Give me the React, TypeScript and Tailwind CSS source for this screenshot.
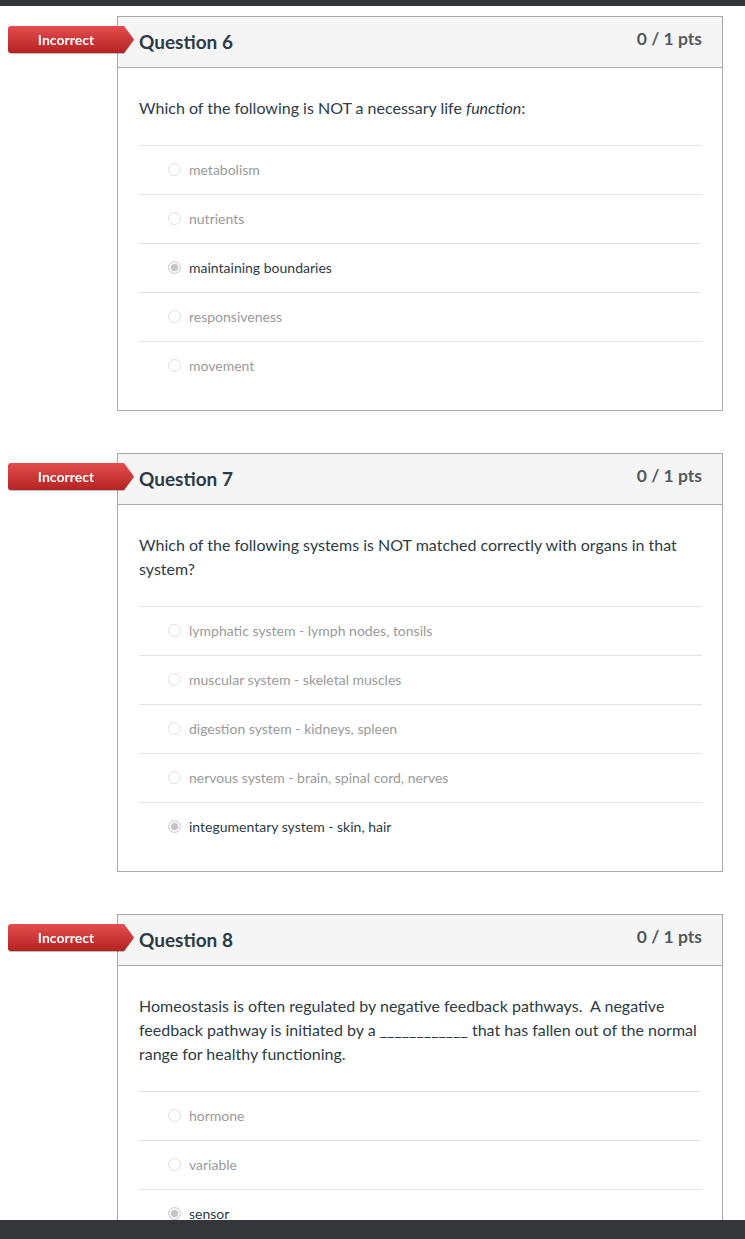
type Answer = { text: string; selected?: boolean };

type Question = {
  number: number;
  prompt: React.ReactNode;
  answers: Answer[];
};

const QUESTIONS: Question[] = [
  {
    number: 6,
    prompt: (
      <>
        Which of the following is NOT a necessary life <em>function</em>:
      </>
    ),
    answers: [
      { text: "metabolism" },
      { text: "nutrients" },
      { text: "maintaining boundaries", selected: true },
      { text: "responsiveness" },
      { text: "movement" },
    ],
  },
  {
    number: 7,
    prompt: "Which of the following systems is NOT matched correctly with organs in that system?",
    answers: [
      { text: "lymphatic system - lymph nodes, tonsils" },
      { text: "muscular system - skeletal muscles" },
      { text: "digestion system - kidneys, spleen" },
      { text: "nervous system - brain, spinal cord, nerves" },
      { text: "integumentary system - skin, hair", selected: true },
    ],
  },
  {
    number: 8,
    prompt: (
      <>
        Homeostasis is often regulated by negative feedback pathways.&nbsp; A negative feedback
        pathway is initiated by a ____________ that has fallen out of the normal range for healthy
        functioning.
      </>
    ),
    // only what shows above the footer bar
    answers: [{ text: "hormone" }, { text: "variable" }, { text: "sensor", selected: true }],
  },
];

function IncorrectBadge() {
  return (
    <div className="absolute left-[-110px] top-[9px] flex h-[27px] drop-shadow-[0_1px_0_rgba(0,0,0,0.25)]">
      <div className="flex w-[116px] items-center justify-center rounded-l-[3px] bg-gradient-to-b from-[#e44d4d] to-[#b42222] text-[14px] font-bold text-white">
        Incorrect
      </div>
      <div className="w-[10px] bg-gradient-to-b from-[#e44d4d] to-[#b42222] [clip-path:polygon(0_0,100%_50%,0_100%)]" />
    </div>
  );
}

function Radio({ selected }: { selected?: boolean }) {
  return (
    <span
      className={
        selected
          ? "flex h-[13px] w-[13px] items-center justify-center rounded-full border border-[#cfcfcf] bg-[#f4f4f4]"
          : "h-[13px] w-[13px] rounded-full border border-[#dedede] bg-white"
      }
    >
      {selected && <span className="h-[7px] w-[7px] rounded-full bg-[#c4c4c4]" />}
    </span>
  );
}

function QuestionCard({ q }: { q: Question }) {
  return (
    <div className="relative w-[606px] shrink-0 border border-[#a9a9a9] bg-white">
      <IncorrectBadge />
      <div className="flex h-[51px] items-center justify-between border-b border-[#a9a9a9] bg-[#f5f5f5] pl-[21px] pr-[20px]">
        <h2 className="text-[19px] font-bold text-[#2d3b45]">Question {q.number}</h2>
        <span className="mb-[6px] text-[17.5px] font-bold text-[#555a5e]">0 / 1 pts</span>
      </div>
      <div className="pb-[20px] pl-[21px] pr-[20px] pt-[28px]">
        <p className="mb-[25px] text-[16px] leading-[24px] text-[#2d3b45]">{q.prompt}</p>
        <div>
          {q.answers.map((a) => (
            <div
              key={a.text}
              className="flex h-[49px] items-center border-t border-[#e3e3e3] pb-[2px] pl-[29px]"
            >
              <Radio selected={a.selected} />
              <span
                className={
                  a.selected
                    ? "ml-[8px] text-[14px] text-[#2d3b45]"
                    : "ml-[8px] text-[14px] text-[#9a9a9a]"
                }
              >
                {a.text}
              </span>
            </div>
          ))}
        </div>
      </div>
    </div>
  );
}

export default function App() {
  return (
    <div className="flex h-[1239px] w-[745px] flex-col overflow-hidden bg-white font-['Lato',sans-serif]">
      <div className="h-[6px] shrink-0 bg-[#343539]" />
      <div className="flex min-h-0 flex-1 flex-col gap-[42px] overflow-hidden pl-[117px] pt-[10px]">
        {QUESTIONS.map((q) => (
          <QuestionCard key={q.number} q={q} />
        ))}
      </div>
      <div className="h-[19px] shrink-0 bg-[#35363a]" />
    </div>
  );
}
